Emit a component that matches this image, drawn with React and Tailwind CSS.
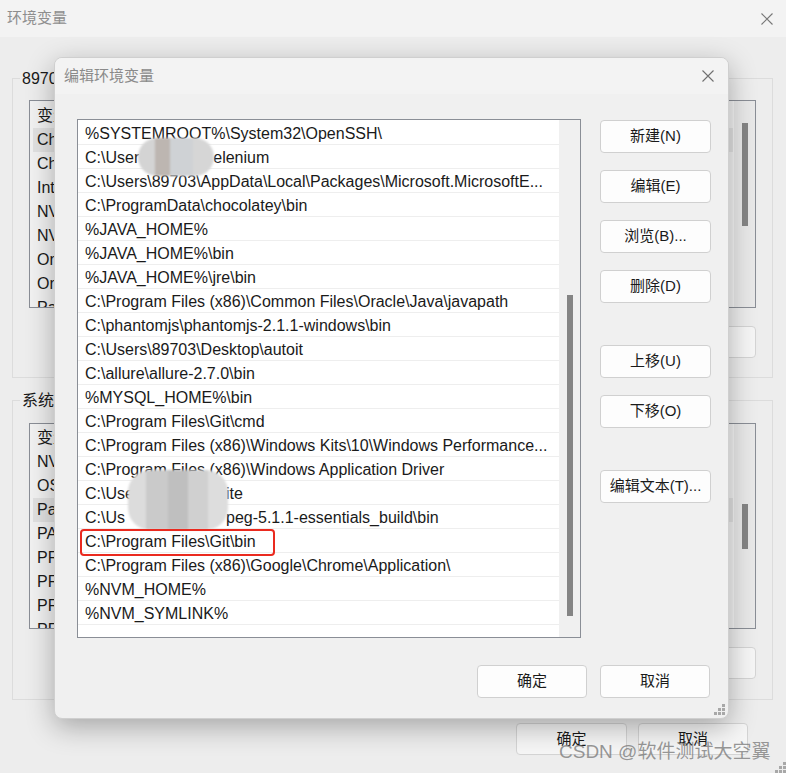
import React from "react";

const FONT = "font-['Liberation_Sans','Noto_Sans_CJK_SC',sans-serif]";

function CloseX({ className = "" }) {
  return (
    <svg width="12" height="12" viewBox="0 0 12 12" className={className}>
      <path d="M0.5 0.5 L11.5 11.5 M11.5 0.5 L0.5 11.5" stroke="currentColor" strokeWidth="1.1" fill="none" />
    </svg>
  );
}

function Grip({ className = "" }) {
  return (
    <svg width="11" height="11" viewBox="0 0 11 11" className={className}>
      {[
        [8, 0],
        [4, 4],
        [8, 4],
        [0, 8],
        [4, 8],
        [8, 8],
      ].map(([x, y], i) => (
        <rect key={i} x={x} y={y} width="3" height="3" fill="#a8a8a8" />
      ))}
    </svg>
  );
}

function BgButton({ children, className = "" }) {
  return (
    <div
      className={`h-[32px] rounded-[4px] border border-[#d4d4d4] bg-[#f6f6f6] flex items-center justify-center text-[15px] text-[#1a1a1a] ${className}`}
    >
      {children}
    </div>
  );
}

function DlgButton({ children, className = "" }) {
  return (
    <div
      className={`h-[33px] rounded-[4px] border border-[#d0d0d0] bg-[#fdfdfd] flex items-center justify-center text-[15px] text-[#1a1a1a] ${className}`}
    >
      {children}
    </div>
  );
}

function BgList({ header, items, selected, thumbTop, thumbH, height, padTop }) {
  return (
    <div
      className="mx-[16px] border border-[#8a8e96] bg-[#f2f2f2] flex overflow-hidden"
      style={{ height }}
    >
      <div className="flex-1 pl-[3px] overflow-hidden" style={{ paddingTop: padTop }}>
        <div className="h-[24px] flex items-center pl-[4px] text-[16px] text-[#1a1a1a]">
          {header}
        </div>
        {items.map((t, i) => (
          <div
            key={i}
            className={`h-[24px] flex items-center pl-[4px] text-[16px] text-[#1a1a1a] whitespace-nowrap ${
              i === selected ? "bg-[#e2e2e2]" : ""
            }`}
          >
            {t}
          </div>
        ))}
      </div>
      <div className="w-[22px] bg-[#e9e9e9] border-l border-[#f6f6f6] flex justify-center">
        <div
          className="w-[6px] bg-[#858585]"
          style={{ marginTop: thumbTop, height: thumbH }}
        />
      </div>
    </div>
  );
}

const rows = [
  "%SYSTEMROOT%\\System32\\OpenSSH\\",
  "BLUR1",
  "C:\\Users\\89703\\AppData\\Local\\Packages\\Microsoft.MicrosoftE...",
  "C:\\ProgramData\\chocolatey\\bin",
  "%JAVA_HOME%",
  "%JAVA_HOME%\\bin",
  "%JAVA_HOME%\\jre\\bin",
  "C:\\Program Files (x86)\\Common Files\\Oracle\\Java\\javapath",
  "C:\\phantomjs\\phantomjs-2.1.1-windows\\bin",
  "C:\\Users\\89703\\Desktop\\autoit",
  "C:\\allure\\allure-2.7.0\\bin",
  "%MYSQL_HOME%\\bin",
  "C:\\Program Files\\Git\\cmd",
  "C:\\Program Files (x86)\\Windows Kits\\10\\Windows Performance...",
  "C:\\Program Files (x86)\\Windows Application Driver",
  "BLUR2",
  "BLUR3",
  "C:\\Program Files\\Git\\bin",
  "C:\\Program Files (x86)\\Google\\Chrome\\Application\\",
  "%NVM_HOME%",
  "%NVM_SYMLINK%",
];

function RowText({ t }) {
  if (t === "BLUR1")
    return (
      <>
        C:\User<span className="inline-block w-[74px]" />elenium
      </>
    );
  if (t === "BLUR2")
    return (
      <>
        C:\Use<span className="inline-block w-[92px]" />ite
      </>
    );
  if (t === "BLUR3")
    return (
      <>
        C:\Us<span className="inline-block w-[101px]" />peg-5.1.1-essentials_build\bin
      </>
    );
  return <>{t}</>;
}

export default function App() {
  return (
    <div className={`relative w-[786px] h-[773px] overflow-hidden bg-[#ededed] ${FONT}`}>
      {/* Background window: 环境变量 */}
      <div className="h-[37px] bg-[#f3f3f3] flex items-center justify-between pl-[7px] pr-[13px]">
        <span className="text-[15px] text-[#8e8e8e]">环境变量</span>
        <CloseX className="text-[#777]" />
      </div>

      <div className="pl-[12px] pr-[13px] pt-[41px]">
        {/* user variables */}
        <div className="relative h-[300px] border border-[#dcdcdc] pt-[21px]">
          <span className="absolute -top-[10px] left-[7px] bg-[#ededed] px-[2px] text-[16px] text-[#1a1a1a] leading-[20px]">
            89703 的用户变量(U)
          </span>
          <BgList
            header="变量"
            items={[
              "ChocolateyInstall",
              "ChocolateyLastPathUpdate",
              "IntelliJ IDEA",
              "NVM_HOME",
              "NVM_SYMLINK",
              "OneDrive",
              "OneDriveConsumer",
              "Path",
            ]}
            selected={0}
            thumbTop={22}
            thumbH={103}
            height={208}
            padTop={3}
          />
          <div className="mt-[18px] pr-[16px] flex justify-end gap-[10px]">
            <BgButton className="w-[110px]">新建(W)...</BgButton>
            <BgButton className="w-[110px]">编辑(E)...</BgButton>
            <BgButton className="w-[110px]">删除(D)</BgButton>
          </div>
        </div>

        {/* system variables */}
        <div className="relative mt-[22px] h-[300px] border border-[#dcdcdc] pt-[22px]">
          <span className="absolute -top-[10px] left-[7px] bg-[#ededed] px-[2px] text-[16px] text-[#1a1a1a] leading-[20px]">
            系统变量(S)
          </span>
          <BgList
            header="变量"
            items={[
              "NVM_HOME",
              "OS",
              "Path",
              "PATHEXT",
              "PROCESSOR_ARCHITECTURE",
              "PROCESSOR_IDENTIFIER",
              "PROCESSOR_LEVEL",
              "PROCESSOR_REVISION",
            ]}
            selected={2}
            thumbTop={80}
            thumbH={45}
            height={206}
            padTop={2}
          />
          <div className="mt-[18px] pr-[16px] flex justify-end gap-[10px]">
            <BgButton className="w-[110px]">新建(W)...</BgButton>
            <BgButton className="w-[110px]">编辑(I)...</BgButton>
            <BgButton className="w-[110px]">删除(L)</BgButton>
          </div>
        </div>

        <div className="mt-[23px] pr-[25px] flex justify-end gap-[11px]">
          <BgButton className="w-[111px]">确定</BgButton>
          <BgButton className="w-[110px]">取消</BgButton>
        </div>
      </div>

      <Grip className="absolute right-[0px] bottom-[0px]" />

      {/* Watermark */}
      <div className="absolute left-[559px] top-[739px] text-[19px] leading-[26px] text-[rgba(120,120,120,0.75)] whitespace-nowrap">
        CSDN @软件测试大空翼
      </div>

      {/* Dialog: 编辑环境变量 */}
      <div className="absolute left-[54px] top-[57px] w-[675px] h-[662px] rounded-[8px] bg-[#f0f0f0] border border-[#cfcfcf] shadow-[0_8px_28px_rgba(0,0,0,0.3)] overflow-hidden flex flex-col">
        <div className="h-[36px] bg-[#f3f3f3] flex items-center justify-between pl-[9px] pr-[14px] shrink-0">
          <span className="text-[15px] text-[#8a8a8a]">编辑环境变量</span>
          <CloseX className="text-[#707070]" />
        </div>

        <div className="mt-[25px] pl-[22px] flex">
          {/* list */}
          <div className="relative w-[504px] h-[519px] border border-[#8a8e96] bg-white flex">
            <div className="flex-1 overflow-hidden pt-[1px]">
              {rows.map((t, i) => (
                <div
                  key={i}
                  className="h-[24px] border-b border-[#eeeeee] pl-[7px] pt-[2px] flex items-center text-[16px] text-[#1a1a1a] whitespace-nowrap overflow-hidden"
                >
                  <RowText t={t} />
                </div>
              ))}
            </div>
            <div className="w-[21px] bg-[#f0f0f0] flex justify-center">
              <div className="mt-[175px] w-[6px] h-[321px] bg-[#858585]" />
            </div>

            {/* blurred redactions */}
            <div className="absolute left-[60px] top-[18px] w-[76px] h-[38px] rounded-[19px] blur-[1px] bg-[linear-gradient(90deg,#d4d4d4_0_22%,#bdb6b1_22%_42%,#cfd2d5_42%_72%,#d6d6d6_72%_100%)]" />
            <div className="absolute left-[50px] top-[350px] w-[100px] h-[60px] rounded-[22px] blur-[1px] bg-[linear-gradient(90deg,#dcdcdc_0_18%,#cacaca_18%_40%,#bfbfbf_40%_60%,#d0d0d0_60%_80%,#dddddd_80%_100%)]" />

            {/* red highlight */}
            <div className="absolute left-[2px] top-[409px] w-[195px] h-[27px] rounded-[4px] border-2 border-[#ea2a1f]" />
          </div>

          {/* right buttons */}
          <div className="ml-[19px] w-[111px] pt-[1px] flex flex-col">
            <DlgButton>新建(N)</DlgButton>
            <DlgButton className="mt-[17px]">编辑(E)</DlgButton>
            <DlgButton className="mt-[17px]">浏览(B)...</DlgButton>
            <DlgButton className="mt-[17px]">删除(D)</DlgButton>
            <DlgButton className="mt-[42px]">上移(U)</DlgButton>
            <DlgButton className="mt-[17px]">下移(O)</DlgButton>
            <DlgButton className="mt-[42px]">编辑文本(T)...</DlgButton>
          </div>
        </div>

        <div className="mt-[27px] pr-[18px] flex justify-end gap-[13px]">
          <DlgButton className="w-[110px]">确定</DlgButton>
          <DlgButton className="w-[110px]">取消</DlgButton>
        </div>

        <Grip className="absolute right-[3px] bottom-[3px]" />
      </div>
    </div>
  );
}
